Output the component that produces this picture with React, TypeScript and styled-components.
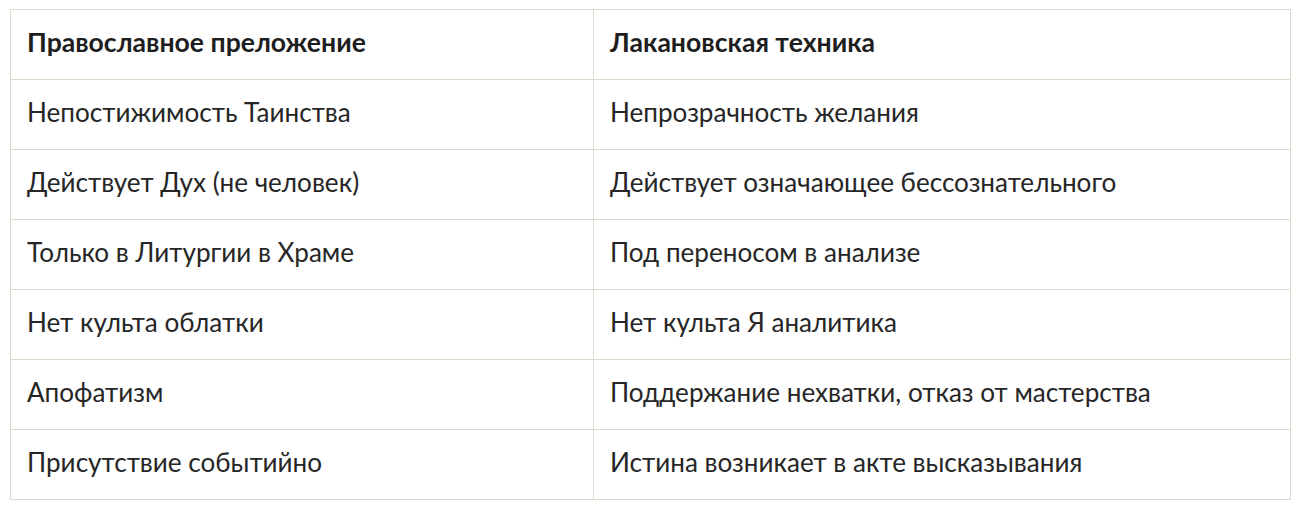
import React from 'react';
import styled, {createGlobalStyle} from 'styled-components';

const rows: [string, string][] = [
    ['Непостижимость Таинства', 'Непрозрачность желания'],
    ['Действует Дух (не человек)', 'Действует означающее бессознательного'],
    ['Только в Литургии в Храме', 'Под переносом в анализе'],
    ['Нет культа облатки', 'Нет культа Я аналитика'],
    ['Апофатизм', 'Поддержание нехватки, отказ от мастерства'],
    ['Присутствие событийно', 'Истина возникает в акте высказывания'],
];

const GlobalStyle = createGlobalStyle`
    body {
        margin: 0;
        background: #ffffff;
        font-family: Lato, "Noto Sans", sans-serif;
        color: #222222;
    }
`;

const Page = styled.div`
    padding: 9px 10px;
`;

const Table = styled.table`
    width: 1281px;
    border-collapse: collapse;
    table-layout: fixed;
`;

const HeadCell = styled.th`
    box-sizing: border-box;
    height: 70px;
    padding: 0 16px 6px 16px;
    border: 1px solid #dedacb;
    text-align: left;
    font-size: 26.6px;
    font-weight: 700;
    color: #1e1e1e;
`;

const Cell = styled.td`
    box-sizing: border-box;
    height: 70px;
    padding: 0 16px 6px 16px;
    border: 1px solid #dedacb;
    font-size: 26.1px;
    font-weight: 400;
    color: #262626;
`;

const App = () => {
    return (
        <Page>
            <GlobalStyle/>
            <Table>
                <colgroup>
                    <col style={{width: 583}}/>
                    <col/>
                </colgroup>
                <thead>
                    <tr>
                        <HeadCell>{'Православное преложение'}</HeadCell>
                        <HeadCell>{'Лакановская техника'}</HeadCell>
                    </tr>
                </thead>
                <tbody>
                    {rows.map(([left, right]) => (
                        <tr key={left}>
                            <Cell>{left}</Cell>
                            <Cell>{right}</Cell>
                        </tr>
                    ))}
                </tbody>
            </Table>
        </Page>
    );
};

export default App;
